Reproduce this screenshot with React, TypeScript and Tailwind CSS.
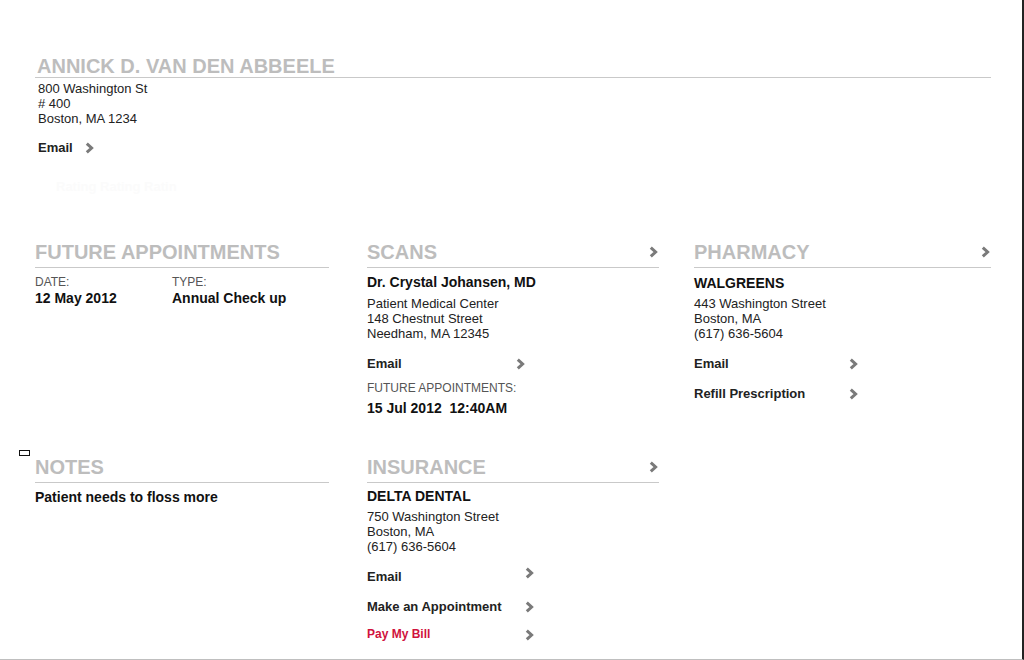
import type { ReactNode } from 'react'

const font = { fontFamily: '"Liberation Sans", Arial, sans-serif' }

function Chevron({ className = '' }: { className?: string }) {
  return (
    <svg width="9" height="12" viewBox="0 0 9 12" className={className}>
      <path d="M1.8 1.6 L6.6 6 L1.8 10.4" fill="none" stroke="#7a7a7a" strokeWidth="3" strokeLinejoin="miter" />
    </svg>
  )
}

function SectionHeader({ title, arrow = false }: { title: string; arrow?: boolean }) {
  return (
    <div className="flex items-center justify-between border-b border-[#c9c9c9] pb-[3px]">
      <h2 className="h-[24px] text-[20px] leading-[24px] font-bold text-[#bdbdbd]">{title}</h2>
      {arrow && <Chevron className="mr-[1px]" />}
    </div>
  )
}

function LinkRow({ label, width, red = false, className = '', chevronClass = '' }: { label: string; width: string; red?: boolean; className?: string; chevronClass?: string }) {
  return (
    <div className={`flex items-center justify-between ${width} ${className}`}>
      <span className={`leading-[15px] font-bold ${red ? 'text-[12px] text-[#d0123d]' : 'text-[13px] text-[#222]'}`}>{label}</span>
      <Chevron className={chevronClass} />
    </div>
  )
}

function Lines({ children }: { children: ReactNode }) {
  return <div className="text-[13px] leading-[15px] text-[#222]">{children}</div>
}

export default function App() {
  return (
    <div style={font} className="relative h-[660px] w-full border-r-2 border-b border-r-[#232323] border-b-[#bfbfbf] bg-white">
      <div className="pl-[35px] pr-[31px] pt-[54px]">
        {/* patient */}
        <div className="border-b border-[#c9c9c9]">
          <h1 className="pl-[2px] h-[23px] text-[20px] leading-[24px] font-bold text-[#bdbdbd]">ANNICK D. VAN DEN ABBEELE</h1>
        </div>
        <div className="pl-[3px] pt-[3px]">
          <Lines>
            <div>800 Washington St</div>
            <div># 400</div>
            <div>Boston, MA 1234</div>
          </Lines>
          <div className="mt-[14px] flex items-center gap-[12px]">
            <span className="text-[13px] leading-[15px] font-bold text-[#222]">Email</span>
            <Chevron />
          </div>
          <div className="mt-[24px] pl-[18px] text-[13px] leading-[15px] font-bold text-[#fbfbfb]">Rating Rating Ratin</div>
        </div>

        {/* cards */}
        <div className="mt-[46px] flex">
          <div className="w-[294px]">
            <SectionHeader title="FUTURE APPOINTMENTS" />
            <div className="mt-[7px] flex">
              <div className="w-[137px]">
                <div className="text-[12px] leading-[14px] text-[#555]">DATE:</div>
                <div className="mt-[1px] text-[14px] leading-[16px] font-bold text-[#111]">12 May 2012</div>
              </div>
              <div>
                <div className="text-[12px] leading-[14px] text-[#555]">TYPE:</div>
                <div className="mt-[1px] text-[14px] leading-[16px] font-bold text-[#111]">Annual Check up</div>
              </div>
            </div>
          </div>

          <div className="ml-[38px] w-[292px]">
            <SectionHeader title="SCANS" arrow />
            <div className="mt-[6px] text-[14px] leading-[16px] font-bold text-[#111]">Dr. Crystal Johansen, MD</div>
            <div className="mt-[6px]">
              <Lines>
                <div>Patient Medical Center</div>
                <div>148 Chestnut Street</div>
                <div>Needham, MA 12345</div>
              </Lines>
            </div>
            <LinkRow label="Email" width="w-[158px]" className="mt-[15px]" />
            <div className="mt-[10px] text-[12px] leading-[14px] text-[#555]">FUTURE APPOINTMENTS:</div>
            <div className="mt-[5px] text-[14px] leading-[16px] font-bold text-[#111] whitespace-pre">15 Jul 2012  12:40AM</div>
          </div>

          <div className="ml-[35px] w-[297px]">
            <SectionHeader title="PHARMACY" arrow />
            <div className="mt-[7px] text-[14px] leading-[16px] font-bold text-[#111]">WALGREENS</div>
            <div className="mt-[5px]">
              <Lines>
                <div>443 Washington Street</div>
                <div>Boston, MA</div>
                <div>(617) 636-5604</div>
              </Lines>
            </div>
            <LinkRow label="Email" width="w-[164px]" className="mt-[15px]" />
            <LinkRow label="Refill Prescription" width="w-[164px]" className="mt-[15px]" />
          </div>
        </div>

        <div className="mt-[39px] flex">
          <div className="relative w-[294px]">
            <div className="absolute left-[-16px] top-[-5px] h-[6px] w-[11px] border border-[#111]" />
            <SectionHeader title="NOTES" />
            <div className="mt-[6px] text-[14px] leading-[16px] font-bold text-[#111]">Patient needs to floss more</div>
          </div>
          <div className="ml-[38px] w-[292px]">
            <SectionHeader title="INSURANCE" arrow />
            <div className="mt-[5px] text-[14px] leading-[16px] font-bold text-[#111]">DELTA DENTAL</div>
            <div className="mt-[5px]">
              <Lines>
                <div>750 Washington Street</div>
                <div>Boston, MA</div>
                <div>(617) 636-5604</div>
              </Lines>
            </div>
            <LinkRow label="Email" width="w-[167px]" className="mt-[15px]" chevronClass="-translate-y-[4px]" />
            <LinkRow label="Make an Appointment" width="w-[167px]" className="mt-[15px]" />
            <LinkRow label="Pay My Bill" width="w-[167px]" className="mt-[13px]" red />
          </div>
        </div>
      </div>
    </div>
  )
}
